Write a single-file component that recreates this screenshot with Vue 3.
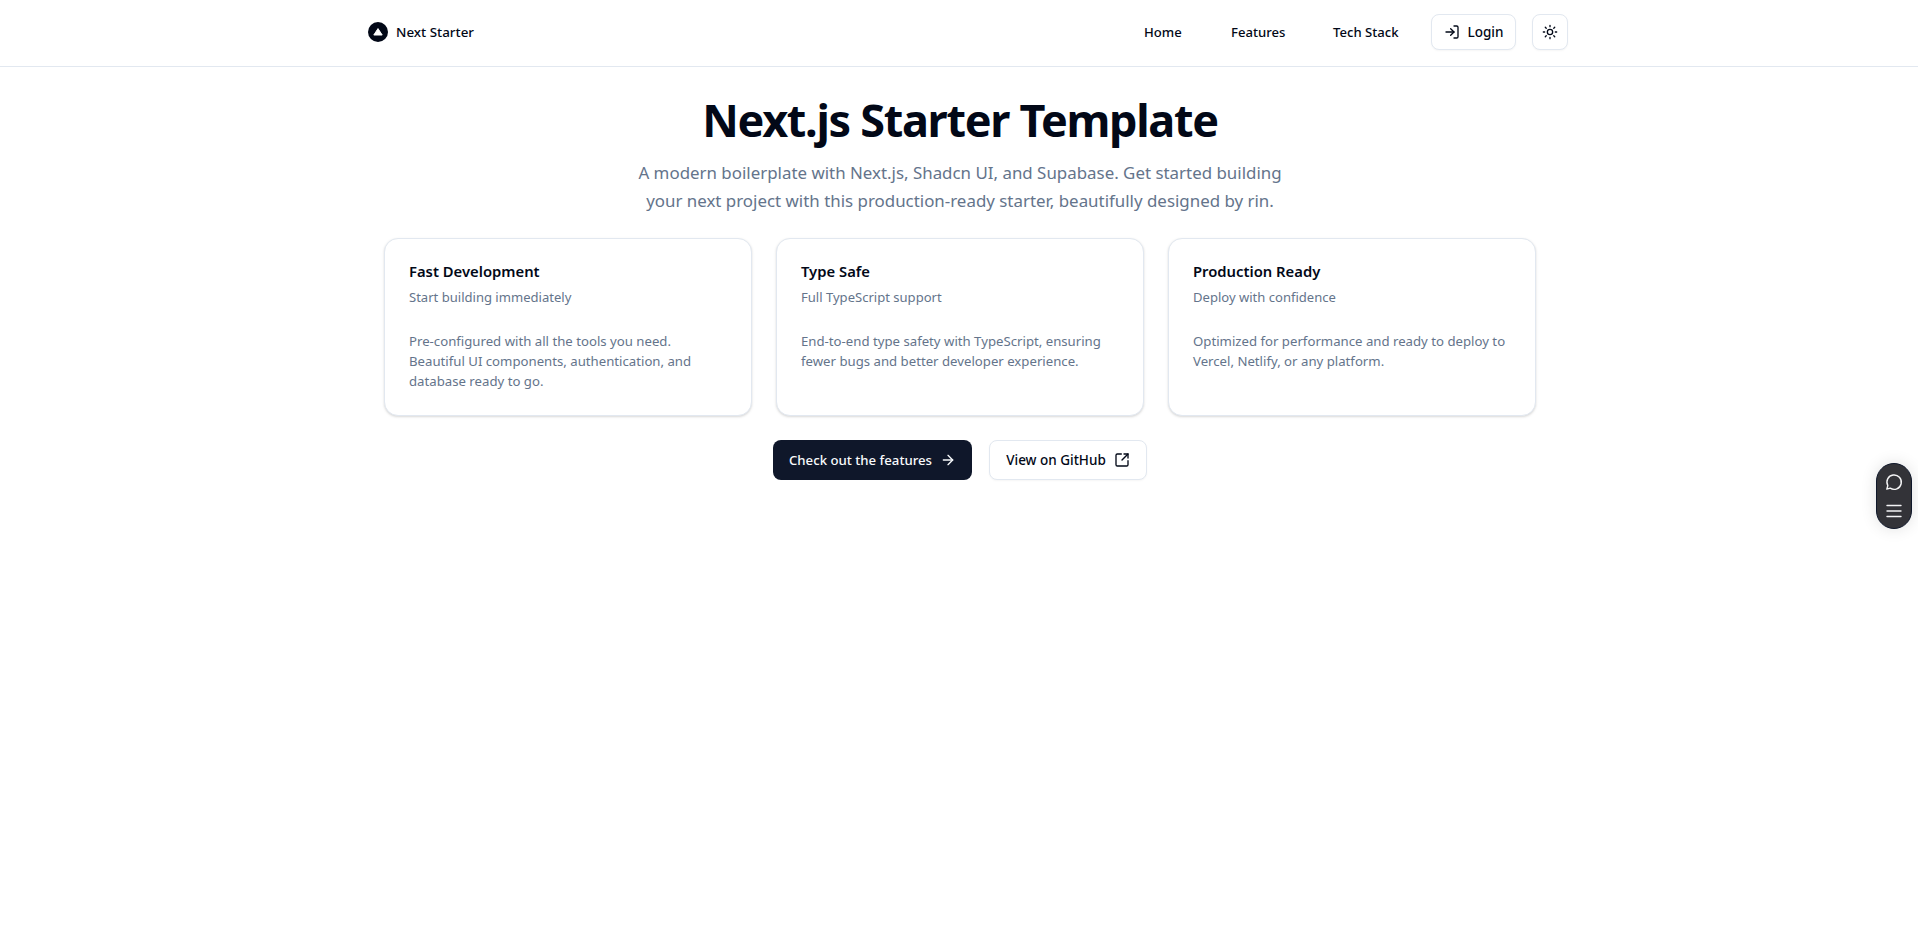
<template>
  <div class="page">
    <header class="header">
      <div class="brand">
        <svg class="logo" viewBox="0 0 20 20" width="20" height="20">
          <circle cx="10" cy="10" r="10" fill="#020817" />
          <path d="M10 6.6 14.2 13H5.8Z" fill="#fff" stroke="#fff" stroke-linejoin="round" />
        </svg>
        <span>Next Starter</span>
      </div>
      <nav class="nav">
        <a v-for="link in links" :key="link" class="nav-link">{{ link }}</a>
        <button class="btn-outline login">
          <svg viewBox="0 0 24 24" width="16" height="16" class="icon">
            <path d="M15 3h4a2 2 0 0 1 2 2v14a2 2 0 0 1-2 2h-4" />
            <path d="m10 17 5-5-5-5" />
            <path d="M15 12H3" />
          </svg>
          Login
        </button>
        <button class="btn-outline theme">
          <svg viewBox="0 0 24 24" width="16" height="16" class="icon">
            <circle cx="12" cy="12" r="4" />
            <path d="M12 2v2M12 20v2M4.93 4.93l1.41 1.41M17.66 17.66l1.41 1.41M2 12h2M20 12h2M6.34 17.66l-1.41 1.41M19.07 4.93l-1.41 1.41" />
          </svg>
        </button>
      </nav>
    </header>

    <main class="main">
      <h1>Next.js Starter Template</h1>
      <p class="lead">
        A modern boilerplate with Next.js, Shadcn UI, and Supabase. Get started building<br />
        your next project with this production-ready starter, beautifully designed by rin.
      </p>

      <div class="cards">
        <div v-for="card in cards" :key="card.title" class="card">
          <h3>{{ card.title }}</h3>
          <p class="sub">{{ card.sub }}</p>
          <p class="body">{{ card.body }}</p>
        </div>
      </div>

      <div class="actions">
        <button class="btn-primary">
          Check out the features
          <svg viewBox="0 0 24 24" width="16" height="16" class="icon">
            <path d="M5 12h14" />
            <path d="m12 5 7 7-7 7" />
          </svg>
        </button>
        <button class="btn-outline github">
          View on GitHub
          <svg viewBox="0 0 24 24" width="16" height="16" class="icon">
            <path d="M21 13v6a2 2 0 0 1-2 2H5a2 2 0 0 1-2-2V5a2 2 0 0 1 2-2h6" />
            <path d="m21 3-9 9" />
            <path d="M15 3h6v6" />
          </svg>
        </button>
      </div>
    </main>

    <div class="widget">
      <svg viewBox="0 0 20 20" width="20" height="20" class="chat">
        <path d="M6.2 16.2A7.2 7.2 0 1 0 3.8 13.6L2.8 17.2Z" />
      </svg>
      <svg viewBox="0 0 20 20" width="20" height="20" class="chat">
        <path d="M3 4.5h14M3 10h14M3 15.5h14" />
      </svg>
    </div>
  </div>
</template>

<script setup>
const links = ["Home", "Features", "Tech Stack"];

const cards = [
  {
    title: "Fast Development",
    sub: "Start building immediately",
    body: "Pre-configured with all the tools you need. Beautiful UI components, authentication, and database ready to go.",
  },
  {
    title: "Type Safe",
    sub: "Full TypeScript support",
    body: "End-to-end type safety with TypeScript, ensuring fewer bugs and better developer experience.",
  },
  {
    title: "Production Ready",
    sub: "Deploy with confidence",
    body: "Optimized for performance and ready to deploy to Vercel, Netlify, or any platform.",
  },
];
</script>

<style>
html, body { background: #fff; }
</style>

<style scoped>
.page {
  position: relative;
  min-height: 926px;
  background: #fff;
  color: #020817;
  font-family: "Noto Sans", "Open Sans", sans-serif;
  font-size: 14px;
}
.icon { fill: none; stroke: currentColor; stroke-width: 2; stroke-linecap: round; stroke-linejoin: round; flex: none; }
.header {
  height: 64px;
  box-sizing: content-box;
  border-bottom: 1px solid #e2e8f0;
  display: flex;
  align-items: center;
  justify-content: space-between;
  padding: 0 350px 2px 368px;
}
.brand { display: flex; align-items: center; gap: 8px; font-weight: 500; font-size: 13.4px; }
.logo { display: block; }
.nav { display: flex; align-items: center; gap: 16px; }
.nav-link { width: 39px; padding: 0 16px; font-weight: 500; font-size: 13.1px; white-space: nowrap; }
.nav-link:nth-child(2) { width: 54px; }
.nav-link:nth-child(3) { width: 66px; }
button { font-family: inherit; font-size: 13.5px; font-weight: 500; cursor: pointer; display: flex; align-items: center; justify-content: center; }
.btn-outline { background: #fff; color: #020817; border: 1px solid #e2e8f0; border-radius: 8px; height: 36px; box-shadow: 0 1px 2px rgba(0,0,0,.04); }
.login { width: 85px; gap: 8px; padding: 0; }
.theme { width: 36px; padding: 0; }
.main { display: flex; flex-direction: column; align-items: center; padding: 23px 0 0 2px; }
h1 { margin: 0; font-size: 45px; line-height: 60px; font-weight: 700; letter-spacing: -1.3px; }
.lead { margin: 9px 0 0; font-size: 16.9px; line-height: 28px; color: #64748b; text-align: center; }
.cards { width: 1152px; margin-top: 23px; display: grid; grid-template-columns: repeat(3, 1fr); gap: 24px; }
.card { height: 178px; box-sizing: border-box; padding: 20px 24px 0; border: 1px solid #e2e8f0; border-radius: 14px; background: #fff; box-shadow: 0 1px 3px rgba(0,0,0,.1), 0 1px 2px rgba(0,0,0,.06); }
h3 { margin: 0; font-size: 14.8px; line-height: 24px; font-weight: 600; }
.sub { margin: 2px 0 0; font-size: 13.05px; line-height: 24px; color: #64748b; }
.body { margin: 22px 0 0; padding-right: 4px; font-size: 13.2px; line-height: 20px; color: #64748b; }
.actions { display: flex; gap: 17px; margin-top: 24px; }
.btn-primary { width: 199px; height: 40px; gap: 8px; border: none; border-radius: 8px; background: #0f172a; color: #f8fafc; padding: 0; font-size: 13.2px; }
.github { width: 158px; height: 40px; gap: 8px; padding: 0; }
.widget {
  position: absolute;
  right: 6px;
  top: 463px;
  width: 36px;
  height: 66px;
  box-sizing: border-box;
  border: 1px solid #0f172a;
  border-radius: 18px;
  background: #333338;
  color: #f4f4f5;
  display: flex;
  flex-direction: column;
  align-items: center;
  justify-content: center;
  gap: 9px;
  box-shadow: 0 0 16px rgba(0,0,0,.12);
}
.chat { fill: none; stroke: currentColor; stroke-width: 1.4; stroke-linecap: round; stroke-linejoin: round; flex: none; }
</style>
